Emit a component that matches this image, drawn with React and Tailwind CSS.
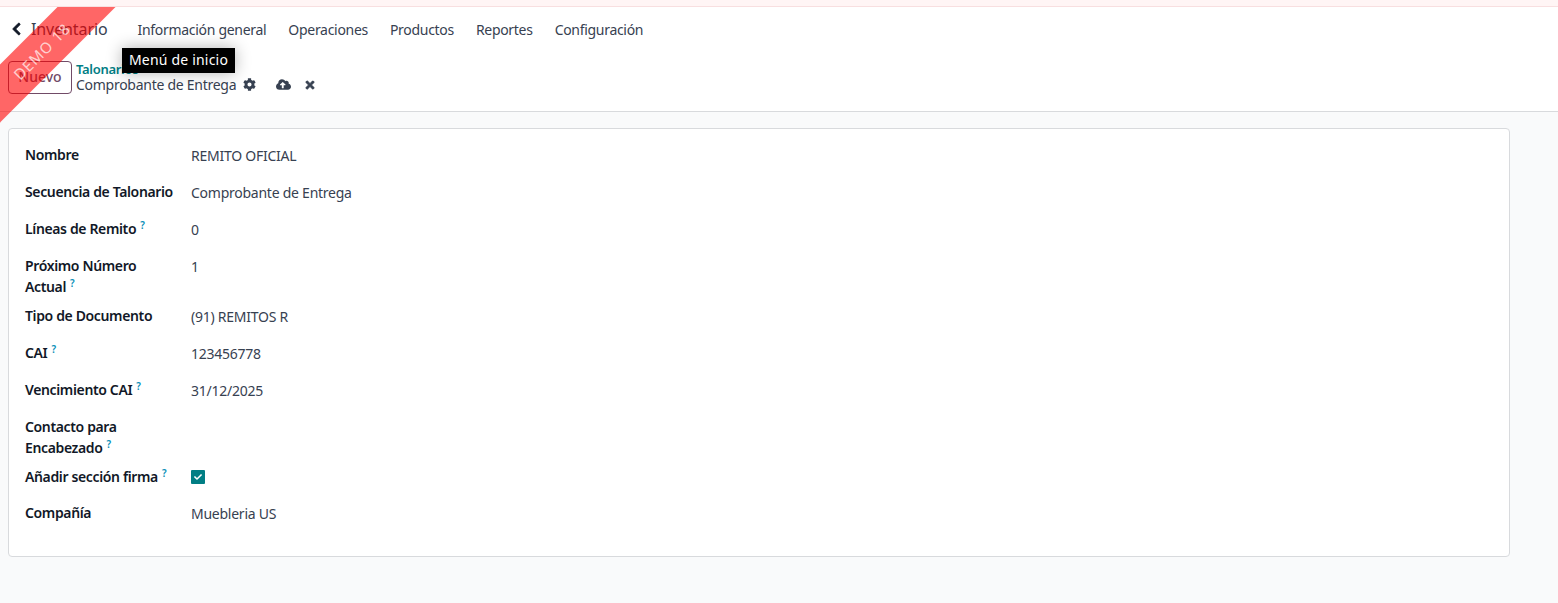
import React from "react";
import { FaChevronLeft, FaCog, FaCloudUploadAlt, FaTimes, FaCheck } from "react-icons/fa";

const Help = () => <sup className="ml-1 text-[10px] font-semibold text-[#0a8fb8] leading-none relative -top-[5px] align-baseline tracking-normal">?</sup>;

const Row = ({ label, help, children, className = "" }) => (
  <div className={`flex ${className}`}>
    <div className="w-[166px] shrink-0 pb-2 pr-2 leading-[21px] font-semibold tracking-[-0.36px] text-[#111827]">
      {label}
      {help && <Help />}
    </div>
    <div className="pt-px leading-[21px] tracking-[-0.25px] text-[#374151]">{children}</div>
  </div>
);

export default function App() {
  return (
    <div className="relative h-[603px] w-[1558px] overflow-hidden bg-[#f9fafb] text-[14px] text-[#374151] font-['Noto_Sans',sans-serif]">
      <div className="h-[7px] border-b border-[#f8dfe0] bg-[#fff5f5]" />

      <nav className="flex h-[46px] items-center bg-white pb-[2px] pl-[11px]">
        <FaChevronLeft className="mr-[9px] h-[14px] w-[11px] text-[#111827]" stroke="currentColor" strokeWidth={30} />
        <span className="mr-[30px] text-[16px] tracking-[-0.1px] text-[#374151]">Inventario</span>
        <div className="flex gap-[22px] tracking-[-0.3px]">
          <a>Información general</a>
          <a>Operaciones</a>
          <a>Productos</a>
          <a>Reportes</a>
          <a>Configuración</a>
        </div>
      </nav>

      <div className="flex h-[59px] items-start border-b border-[#d8dadd] bg-white pl-2 pt-[8px]">
        <button className="h-[33px] w-16 rounded-[4px] border border-[#714b67] bg-white pb-[2px] font-medium text-[#714b67]">Nuevo</button>
        <div className="ml-1 flex flex-col">
          <span className="text-[13px] font-semibold leading-[17px] tracking-[-0.3px] text-[#017e84]">Talonarios</span>
          <div className="-mt-[2px] flex items-center leading-[17px] text-[#374151]">
            <span className="tracking-[-0.27px]">Comprobante de Entrega</span>
            <FaCog className="ml-[7px] h-[13px] w-[13px]" />
            <FaCloudUploadAlt className="ml-[20px] h-[15px] w-[15px]" />
            <FaTimes className="ml-[13px] h-[12px] w-[12px]" stroke="currentColor" strokeWidth={30} />
          </div>
        </div>
      </div>

      <main className="pl-2 pt-4">
        <div className="h-[429px] w-[1502px] rounded-[4px] border border-[#d8dadd] bg-white pl-4 pt-[15px]">
          <Row label="Nombre">REMITO OFICIAL</Row>
          <Row label="Secuencia de Talonario" className="pt-[8px]">Comprobante de Entrega</Row>
          <Row label="Líneas de Remito" help className="pt-[8px]">0</Row>
          <Row label="Próximo Número Actual" help className="pt-[8px]">1</Row>
          <Row label="Tipo de Documento">(91) REMITOS R</Row>
          <Row label="CAI" help className="pt-[8px]">123456778</Row>
          <Row label="Vencimiento CAI" help className="pt-[8px]">31/12/2025</Row>
          <Row label="Contacto para Encabezado" help className="pt-[8px]" />
          <div className="flex">
            <div className="w-[166px] shrink-0 leading-[21px] font-semibold tracking-[-0.36px] text-[#111827]">Añadir sección firma<Help /></div>
            <span className="mt-[4px] flex h-[14px] w-[14px] items-center justify-center rounded-[1px] bg-[#017e84] text-white"><FaCheck className="h-2 w-2" /></span>
          </div>
          <Row label="Compañía" className="pt-[15px]">Muebleria US</Row>
        </div>
      </main>

      <div className="pointer-events-none absolute left-0 top-[7px] h-[200px] w-[200px] overflow-hidden">
        <div className="absolute left-[-108px] top-[24px] flex h-[41px] w-[300px] -rotate-45 items-center justify-center bg-[#ff0000]/60 text-[15px] tracking-[1px] text-white/70">DEMO 18</div>
      </div>

      <div className="absolute left-[122px] top-[48px] flex h-[25px] w-[113px] items-center justify-center bg-black pb-[3px] tracking-[0.2px] text-white shadow-[0_0_16px_rgba(0,0,0,0.3)]">Menú de inicio</div>
    </div>
  );
}
